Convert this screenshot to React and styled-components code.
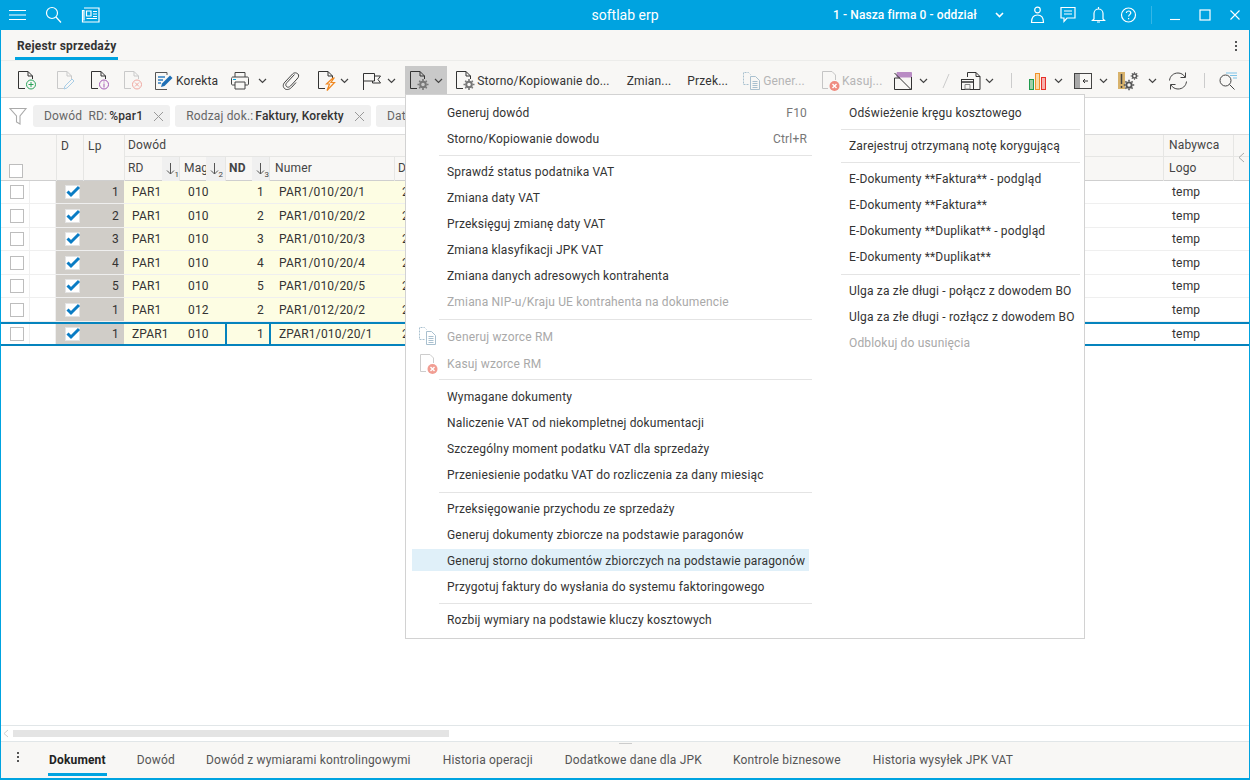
import React from 'react'
import styled, { createGlobalStyle } from 'styled-components'

const GlobalStyle = createGlobalStyle`
  html, body { margin: 0; padding: 0; height: 100%; overflow: hidden; }
  body { font-family: Roboto, "Liberation Sans", sans-serif; font-size: 12px; letter-spacing: 0.17px; color: #333; background: #fff; }
  * { box-sizing: border-box; }
`

const Window = styled.div`
  position: relative;
  width: 1250px;
  height: 780px;
  display: flex;
  flex-direction: column;
  border: 1px solid #00a3e0;
  border-top: 0;
  border-bottom-width: 2px;
  background: #fff;
  overflow: hidden;
`
const TitleBar = styled.div`
  height: 30px;
  margin: 0 -1px;
  background: #00a3e0;
  color: #fff;
  display: grid;
  grid-template-columns: 472px 306px 1fr;
  align-items: center;
  flex: none;
`
const TitleLeft = styled.div`
  display: flex;
  align-items: center;
  gap: 19px;
  padding-left: 9px;
`
const TitleText = styled.div`
  font-size: 14px;
  letter-spacing: 0;
  text-align: center;
`
const TitleRight = styled.div`
  display: flex;
  align-items: center;
  padding-left: 55px;
`
const Company = styled.span`
  font-size: 12px;
  letter-spacing: 0.1px;
  font-weight: 500;
  width: 162px;
`
const TitleIcons = styled.div`
  display: flex;
  align-items: center;
  gap: 13px;
  margin-left: 25px;
`
const TitleDivider = styled.div`
  width: 1px;
  height: 18px;
  background: #35b6e6;
  margin: 0 17px 0 14px;
`
const WinButtons = styled.div`
  display: flex;
  align-items: center;
  gap: 18px;
`
const TabBar = styled.div`
  height: 31px;
  flex: none;
  background: #f8f7f5;
  border-bottom: 1px solid #ececea;
  display: flex;
  align-items: flex-start;
  justify-content: space-between;
  padding: 0 12px 0 14px;
`
const MainTab = styled.div`
  height: 30px;
  padding: 9px 2px 0;
  font-weight: 700;
  font-size: 12px;
  color: #333;
  border-bottom: 3px solid #00a3e0;
`
const Dots = styled.div`
  display: flex;
  flex-direction: column;
  gap: 2px;
  padding: ${p => p.$pad || '11px 0 0'};
  i { width: 2px; height: 2px; background: #555; display: block; }
`
const Toolbar = styled.div`
  height: 37px;
  flex: none;
  background: #f8f7f5;
  border-bottom: 1px solid #d9d9d9;
  display: flex;
  align-items: center;
  padding: 4px 0 1px 15px;
`
const Tool = styled.div`
  display: flex;
  align-items: center;
  flex: none;
  gap: ${p => p.$gap ?? 3}px;
  height: 29px;
  margin-left: ${p => p.$ml || 0}px;
  padding: ${p => p.$pad || 0};
  background: ${p => p.$active ? '#c9c9c9' : 'transparent'};
  color: ${p => p.$off ? '#b5b5b5' : '#333'};
  font-size: 12px;
  white-space: nowrap;
`
const ToolDivider = styled.div`
  width: 1px;
  height: 15px;
  background: #ccc;
  flex: none;
  margin-left: ${p => p.$ml || 0}px;
`
const FilterBar = styled.div`
  height: 37px;
  flex: none;
  border-bottom: 1px solid #dcdcdc;
  display: flex;
  align-items: center;
  gap: 5px;
  padding-left: 8px;
`
const Chip = styled.div`
  height: 22px;
  display: flex;
  align-items: center;
  flex: none;
  padding: 0 6px 0 11px;
  background: #f0f0f0;
  border-radius: 3px;
  color: #666;
  font-size: 12px;
  b { font-weight: 500; color: #333; margin-left: 2px; margin-right: 10px; }
`
const Grid = styled.div`
  flex: 1;
  min-height: 0;
  overflow: hidden;
`
const COLUMNS = '29px 26px 27px 41px 38px 17px 27px 19px 27px 17px 125px 600px 169px 70px 1fr'
const HeadRow = styled.div`
  position: relative;
  display: grid;
  grid-template-columns: ${COLUMNS};
  grid-template-rows: 22px 24px;
  height: 46px;
  background: #f8f7f5;
  border-bottom: 1px solid #cfcfcf;
  color: #444;
`
const Head = styled.div`
  grid-column: ${p => p.$col};
  grid-row: ${p => p.$row};
  display: flex;
  align-items: ${p => p.$top ? 'flex-start' : 'center'};
  padding: ${p => p.$top ? '4px 0 0 4px' : `0 0 2px ${p.$pl ?? 3}px`};
  border-left: ${p => p.$line ? '1px solid #e6e6e4' : '0'};
  border-bottom: ${p => p.$under ? '1px solid #e6e6e4' : '0'};
  font-weight: ${p => p.$bold ? 700 : 400};
  overflow: hidden;
  white-space: nowrap;
`
const HeadBox = styled.div`
  grid-column: 1;
  grid-row: 1 / 3;
  display: flex;
  align-items: flex-end;
  padding: 0 0 3px 8px;
`
const SortHead = styled.div`
  grid-column: ${p => p.$col};
  grid-row: 2;
  display: flex;
  align-items: center;
  background: #f0f0f0;
  overflow: hidden;
`
const HeadChevron = styled.div`
  position: absolute;
  right: 4px;
  top: 17px;
  display: flex;
`
const Row = styled.div`
  display: grid;
  grid-template-columns: ${COLUMNS};
  height: ${p => p.$h}px;
  border-bottom: 1px solid #efefef;
  ${p => p.$selected && `
    border-top: 2px solid #0583bd;
    border-bottom: 2px solid #0583bd;
  `}
`
const Cell = styled.div`
  grid-column: ${p => p.$col};
  display: flex;
  align-items: center;
  justify-content: ${p => p.$right ? 'flex-end' : 'flex-start'};
  padding: ${p => p.$pad || '0 8px'};
  background: ${p => p.$bg || 'transparent'};
  color: #333;
  white-space: nowrap;
  overflow: hidden;
  border-right: ${p => p.$line ? '1px solid #efefef' : '0'};
  border-left: ${p => p.$blue ? '2px solid #0583bd' : '0'};
`
const Box = styled.div`
  width: 14px;
  height: 14px;
  border: 1px solid #bdbdbd;
  background: #fff;
  flex: none;
`
const CheckWrap = styled.div`
  position: relative;
  width: 13px;
  height: 12px;
  background: #fff;
  box-shadow: 0 0 0 1px #e4e4e4;
  svg { position: absolute; left: 0; top: -1px; }
`
const ScrollBar = styled.div`
  height: 17px;
  flex: none;
  border-top: 1px solid #e1e6e8;
  border-bottom: 1px solid #e1e6e8;
  display: flex;
  align-items: center;
  padding-left: 2px;
  gap: 4px;
`
const Thumb = styled.div`
  width: 436px;
  height: 7px;
  background: #e4e4e4;
`
const BottomTabs = styled.div`
  position: relative;
  flex: none;
  height: 36px;
  background: #f8f7f5;
  display: flex;
  align-items: flex-start;
  padding-left: 16px;
`
const Grip = styled.div`
  position: absolute;
  left: 618px;
  top: 1px;
  width: 13px;
  height: 1px;
  background: #ccc;
`
const BottomTab = styled.div`
  height: 34px;
  padding: 11px 1px 0;
  margin-left: ${p => p.$ml}px;
  font-size: 12px;
  color: ${p => p.$on ? '#222' : '#555'};
  font-weight: ${p => p.$on ? 700 : 400};
  border-bottom: ${p => p.$on ? '3px solid #00a3e0' : '0'};
`
const Menu = styled.div`
  position: absolute;
  left: 404px;
  top: 94px;
  width: 680px;
  height: 545px;
  background: #fff;
  border: 1px solid #d2d2d2;
  display: grid;
  grid-template-columns: 403px 1fr;
  padding-top: 5px;
`
const MenuCol = styled.div`
  display: flex;
  flex-direction: column;
  padding-left: ${p => p.$pl}px;
`
const Item = styled.div`
  height: ${p => p.$h || 26}px;
  flex: none;
  display: flex;
  align-items: center;
  justify-content: space-between;
  padding: 0 2px 0 ${p => p.$text}px;
  color: ${p => p.$off ? '#a9a9a9' : '#333'};
  font-size: 12px;
  position: relative;
  white-space: nowrap;
  span { color: #777; }
  svg { position: absolute; left: 6px; top: 3px; }
  ${p => p.$hover && `
    height: 22px;
    margin: 1px 0 3px;
    padding-top: 2px;
    background: #e0f0f9;
  `}
`
const Sep = styled.div`
  height: ${p => p.$h}px;
  flex: none;
  position: relative;
  margin: 0 ${p => p.$mr || 0}px 0 ${p => p.$ml || 0}px;
  &::after {
    content: '';
    position: absolute;
    left: 0;
    right: 0;
    top: ${p => p.$y}px;
    height: 1px;
    background: #e4e4e4;
  }
`

const Stroke = ({ w = 24, h = 24, c = '#333', sw = 1, children }) => (
  <svg width={w} height={h} viewBox={`0 0 ${w} ${h}`} fill="none" stroke={c} strokeWidth={sw} style={{ flex: 'none' }}>{children}</svg>
)

// document outline with a folded corner, a badge goes in children
const Doc = ({ c = '#333', children }) => (
  <svg width="22" height="22" viewBox="0 0 22 22" fill="none" stroke={c} strokeWidth="1" style={{ flex: 'none' }}>
    <path d="M16.5 9V6L12 1.5H2.5V18.5H9" />
    <path d="M12 1.5V6H16.5" />
    {children}
  </svg>
)
const Gear = ({ x, y, c = '#666', s = 1 }) => (
  <g transform={`translate(${x} ${y}) scale(${s})`} stroke={c} fill="none">
    <circle r="2.8" strokeWidth="2" />
    <path strokeWidth="1.6" d="M0-5.5V-3.6M0 3.6V5.5M-5.5 0H-3.6M3.6 0H5.5M-3.8-3.8L-2.6-2.6M2.6 2.6L3.8 3.8M-3.8 3.8L-2.6 2.6M2.6-2.6L3.8-3.8" />
  </g>
)
const Chevron = ({ c = '#444' }) => (
  <Stroke w={9} h={6} c={c} sw={1.2}><path d="M1 1L4.5 4.5L8 1" /></Stroke>
)
const CopyDoc = ({ c = '#a9c0cf' }) => (
  <Stroke w={20} h={20} c={c}>
    <path d="M6.5 13.5H1.5V1.5H6.5L8.5 3.5" strokeDasharray="2 1" />
    <path d="M8.5 5.5H13.5L17.5 9.5V18.5H8.5Z" />
    <path d="M10.5 10.5H15.5M10.5 12.5H15.5M10.5 14.5H15.5M10.5 16.5H15.5" />
  </Stroke>
)
const DocCross = ({ opacity = 1 }) => (
  <svg width="22" height="22" viewBox="0 0 22 22" fill="none" style={{ flex: 'none', opacity }}>
    <path d="M15.5 10V5L12 1.5H2.5V18.5H8" stroke="#c5c5c5" />
    <circle cx="14.5" cy="16" r="5" fill="#ef8c80" />
    <path d="M12.5 14L16.5 18M16.5 14L12.5 18" stroke="#fff" strokeWidth="1.4" />
  </svg>
)
const SortIcon = ({ n }) => (
  <svg width="17" height="20" viewBox="0 0 17 20" fill="none" style={{ flex: 'none' }}>
    <path d="M8.5 4V15M5 11.5L8.5 15L12 11.5" stroke="#555" />
    <text x="12.5" y="18" fontSize="8" fill="#444" stroke="none" fontFamily="Roboto">{n}</text>
  </svg>
)
const CloseSmall = () => (
  <Stroke w={11} h={11} c="#999"><path d="M1 1L10 10M10 1L1 10" /></Stroke>
)

const rows = [
  ['1', 'PAR1', '010', '1', 'PAR1/010/20/1'],
  ['2', 'PAR1', '010', '2', 'PAR1/010/20/2'],
  ['3', 'PAR1', '010', '3', 'PAR1/010/20/3'],
  ['4', 'PAR1', '010', '4', 'PAR1/010/20/4'],
  ['5', 'PAR1', '010', '5', 'PAR1/010/20/5'],
  ['1', 'PAR1', '012', '2', 'PAR1/012/20/2'],
  ['1', 'ZPAR1', '010', '1', 'ZPAR1/010/20/1'],
]
const rowHeights = [23, 24, 23, 24, 23, 24, 24]

const leftMenu = [
  { t: 'Generuj dowód', k: 'F10' },
  { t: 'Storno/Kopiowanie dowodu', k: 'Ctrl+R' },
  { s: 7, y: 3 },
  { t: 'Sprawdź status podatnika VAT' },
  { t: 'Zmiana daty VAT' },
  { t: 'Przeksięguj zmianę daty VAT' },
  { t: 'Zmiana klasyfikacji JPK VAT' },
  { t: 'Zmiana danych adresowych kontrahenta' },
  { t: 'Zmiana NIP-u/Kraju UE kontrahenta na dokumencie', off: true },
  { s: 8, y: 4 },
  { t: 'Generuj wzorce RM', off: true, h: 27, icon: <CopyDoc /> },
  { t: 'Kasuj wzorce RM', off: true, h: 27, icon: <DocCross opacity={0.85} /> },
  { s: 7, y: 2 },
  { t: 'Wymagane dokumenty' },
  { t: 'Naliczenie VAT od niekompletnej dokumentacji' },
  { t: 'Szczególny moment podatku VAT dla sprzedaży' },
  { t: 'Przeniesienie podatku VAT do rozliczenia za dany miesiąc' },
  { s: 8, y: 4 },
  { t: 'Przeksięgowanie przychodu ze sprzedaży' },
  { t: 'Generuj dokumenty zbiorcze na podstawie paragonów' },
  { t: 'Generuj storno dokumentów zbiorczych na podstawie paragonów', hover: true },
  { t: 'Przygotuj faktury do wysłania do systemu faktoringowego' },
  { s: 7, y: 3 },
  { t: 'Rozbij wymiary na podstawie kluczy kosztowych' },
]
const rightMenu = [
  { t: 'Odświeżenie kręgu kosztowego' },
  { s: 7, y: 3 },
  { t: 'Zarejestruj otrzymaną notę korygującą' },
  { s: 7, y: 3 },
  { t: 'E-Dokumenty **Faktura** - podgląd' },
  { t: 'E-Dokumenty **Faktura**' },
  { t: 'E-Dokumenty **Duplikat** - podgląd' },
  { t: 'E-Dokumenty **Duplikat**' },
  { s: 8, y: 4 },
  { t: 'Ulga za złe długi - połącz z dowodem BO' },
  { t: 'Ulga za złe długi - rozłącz z dowodem BO' },
  { t: 'Odblokuj do usunięcia', off: true },
]

const bottomTabs = [
  ['Dokument', 29, true],
  ['Dowód', 29],
  ['Dowód z wymiarami kontrolingowymi', 29],
  ['Historia operacji', 30],
  ['Dodatkowe dane dla JPK', 30],
  ['Kontrole biznesowe', 29],
  ['Historia wysyłek JPK VAT', 30],
]

const App = () => (
  <>
    <GlobalStyle />
    <Window>
      <TitleBar>
        <TitleLeft>
          <Stroke w={17} h={12} c="#fff" sw={1.2}><path d="M0 1.5H17M0 6H17M0 10.5H17" /></Stroke>
          <Stroke w={17} h={18} c="#fff" sw={1.2}><circle cx="7" cy="7" r="5.5" /><path d="M11 11L16 16.5" /></Stroke>
          <Stroke w={19} h={16} c="#fff" sw={1.2}>
            <path d="M3 1H18V15H1.5V3.5H3V13.5" />
            <path d="M5.5 4H10V9H5.5ZM12 4.5H16M12 7H16M12 9.5H16M5.5 11.5H16" />
          </Stroke>
        </TitleLeft>
        <TitleText>softlab erp</TitleText>
        <TitleRight>
          <Company>1 - Nasza firma 0 - oddział</Company>
          <Stroke w={9} h={6} c="#fff" sw={1.6}><path d="M1 1L4.5 4.5L8 1" /></Stroke>
          <TitleIcons>
            <Stroke w={17} h={18} c="#fff" sw={1.2}><circle cx="8.5" cy="4" r="2.8" /><path d="M2.5 16.5C2.5 11 5 9 8.5 9S14.5 11 14.5 16.5Z" /></Stroke>
            <Stroke w={18} h={18} c="#fff" sw={1.2}><path d="M2 1.5H16V12H8L5 15.5V12H2ZM5 5H13M5 8H13" /></Stroke>
            <Stroke w={17} h={18} c="#fff" sw={1.2}><path d="M8.5 1V3M4 13V7.5C4 5 6 3 8.5 3S13 5 13 7.5V13L14.5 14.5H2.5ZM7 16H10" /></Stroke>
            <Stroke w={17} h={18} c="#fff" sw={1.2}>
              <circle cx="8.5" cy="9" r="7" />
              <path d="M6.3 7C6.5 5.5 7.5 5 8.5 5C9.8 5 10.8 5.8 10.8 7C10.8 8.6 8.6 8.7 8.6 10.5M8.6 12V13.3" />
            </Stroke>
          </TitleIcons>
          <TitleDivider />
          <WinButtons>
            <Stroke w={12} h={12} c="#fff" sw={1.1}><path d="M1 10.5H11" /></Stroke>
            <Stroke w={12} h={12} c="#fff" sw={1.2}><rect x="1" y="1" width="10" height="10" /></Stroke>
            <Stroke w={12} h={12} c="#fff" sw={1.1}><path d="M1.5 1.5L10.5 10.5M10.5 1.5L1.5 10.5" /></Stroke>
          </WinButtons>
        </TitleRight>
      </TitleBar>

      <TabBar>
        <MainTab>Rejestr sprzedaży</MainTab>
        <Dots><i /><i /><i /></Dots>
      </TabBar>

      <Toolbar>
        <Tool>
          <Doc>
            <circle cx="15" cy="14.5" r="4.5" stroke="#2aa35a" fill="#f8f7f5" />
            <path d="M12.5 14.5H17.5M15 12V17" stroke="#2aa35a" />
          </Doc>
        </Tool>
        <Tool $ml={17}>
          <Doc c="#c9c9c9"><path d="M9 19L10 16L17 9L19 11L12 18Z" stroke="#a8cde6" fill="#f8f7f5" /></Doc>
        </Tool>
        <Tool $ml={12}>
          <Doc>
            <circle cx="15" cy="14.5" r="4.5" stroke="#a45ab5" fill="#f8f7f5" />
            <path d="M15 13.5V17.5M15 11.5V12.5" stroke="#a45ab5" />
          </Doc>
        </Tool>
        <Tool $ml={11}>
          <Doc c="#c9c9c9">
            <circle cx="15" cy="14.5" r="4.5" stroke="#f0a7a0" fill="#f8f7f5" />
            <path d="M13 12.5L17 16.5M17 12.5L13 16.5" stroke="#f0a7a0" />
          </Doc>
        </Tool>
        <Tool $ml={9} $gap={1}>
          <svg width="22" height="22" viewBox="0 0 22 22" fill="none" style={{ flex: 'none' }}>
            <path d="M14 5V2.5H2.5V19.5H14" stroke="#555" />
            <path d="M5 7H12M5 10H10M5 13H8" stroke="#2f7fc1" strokeWidth="1.3" />
            <path d="M8 17L9 13.5L17 5.5L19.5 8L11.5 16Z" fill="#1f6fb5" />
          </svg>
          Korekta
        </Tool>
        <Tool $ml={12} $gap={8}>
          <Stroke w={20} h={20} c="#444">
            <path d="M5 6V1.5H15V6M5 14H2.5C1.5 14 1.5 13 1.5 13V7.5C1.5 6.5 2.5 6 2.5 6H17.5C18.5 6 18.5 7 18.5 7.5V13C18.5 14 17.5 14 17.5 14H15M5 11H15V18H5Z" />
            <path d="M3 8.5H6" stroke="#00a3e0" />
          </Stroke>
          <Chevron />
        </Tool>
        <Tool $ml={15}>
          <Stroke w={18} h={20} c="#444">
            <path d="M12.5 3.5L5 11.5C3.5 13 3.5 14.5 4.5 15.5S7 16.5 8.5 15L15 8C17 6 17 4 16 3S12.5 1 10.5 3L3 11C0.5 13.5 1 16 2.5 17.5S7 19 9.5 16.5L14 11.5" />
          </Stroke>
        </Tool>
        <Tool $ml={16} $gap={2}>
          <svg width="22" height="22" viewBox="0 0 22 22" fill="none" style={{ flex: 'none' }}>
            <path d="M16.5 8V6L12 1.5H2.5V18.5H9M12 1.5V6H16.5" stroke="#333" />
            <path d="M17 8L10.5 14H13.5L11 20.5L18.5 12.5H15L18 8Z" fill="#f8f7f5" stroke="#f08a24" strokeWidth="1.2" />
          </svg>
          <Chevron />
        </Tool>
        <Tool $ml={13} $gap={5}>
          <Stroke w={20} h={20} c="#333">
            <path d="M1.5 19V2.5H12.5V5H18.5L16 8.5L18.5 12H10.5V10H1.5" />
            <path d="M12.5 5V10H10.5" />
          </Stroke>
          <Chevron />
        </Tool>
        <Tool $ml={9} $active $gap={4} $pad="0 4px 0 3px">
          <Doc c="#333"><Gear x={15} y={14.5} c="#777" /></Doc>
          <Chevron />
        </Tool>
        <Tool $ml={7} $gap={1}>
          <Doc c="#333"><Gear x={15} y={14.5} c="#777" /></Doc>
          Storno/Kopiowanie do...
        </Tool>
        <Tool $ml={17}>Zmian...</Tool>
        <Tool $ml={16}>Przek...</Tool>
        <Tool $ml={14} $off $gap={1}><CopyDoc />Gener...</Tool>
        <Tool $ml={15} $off $gap={0}><DocCross />Kasuj...</Tool>
        <Tool $ml={11} $gap={6}>
          <Stroke w={20} h={20} c="#333">
            <path d="M1.5 7V18.5H18.5V13" />
            <path d="M4 1.5H18.5V6H4Z" fill="#b98cc4" stroke="#b98cc4" />
            <path d="M1.5 2L18 18.5" />
            <path d="M18.5 6V13M1.5 7H7" />
          </Stroke>
          <Chevron />
        </Tool>
        <Tool $ml={13}>
          <Stroke w={10} h={16} c="#ccc"><path d="M2 15L8 1" /></Stroke>
        </Tool>
        <Tool $ml={9} $gap={3}>
          <Stroke w={22} h={20} c="#333">
            <path d="M7.5 6V1.5H16L20 5.5V18.5H14M16 1.5V5.5H20" />
            <rect x="1.5" y="8.5" width="12" height="10" />
            <path d="M1.5 11H13.5" strokeWidth="1.5" />
            <path d="M5 13.5H10V18H5Z" stroke="#888" />
          </Stroke>
          <Chevron />
        </Tool>
        <ToolDivider $ml={17} />
        <Tool $ml={16} $gap={6}>
          <svg width="20" height="20" viewBox="0 0 20 20" fill="none" style={{ flex: 'none' }}>
            <rect x="1.5" y="8.5" width="4" height="10" fill="#9ed0a8" stroke="#1f9a4c" />
            <rect x="7.5" y="2.5" width="4" height="16" fill="#fbd9a8" stroke="#f0922a" />
            <rect x="13.5" y="6.5" width="4" height="12" fill="#f7b0ad" stroke="#e62f2a" />
          </svg>
          <Chevron />
        </Tool>
        <Tool $ml={10} $gap={6}>
          <svg width="20" height="18" viewBox="0 0 20 18" fill="none" style={{ flex: 'none' }}>
            <rect x="1.5" y="1.5" width="17" height="15" stroke="#444" />
            <rect x="2" y="2" width="5" height="14" fill="#a8a8a8" />
            <path d="M15 9H10M12 7L10 9L12 11" stroke="#333" />
          </svg>
          <Chevron />
        </Tool>
        <Tool $ml={9} $gap={5}>
          <svg width="26" height="22" viewBox="0 0 26 22" fill="none" style={{ flex: 'none' }}>
            <rect x="1" y="2" width="7" height="17" fill="#d9b36c" />
            <path d="M4.5 4V14M4.5 16V18" stroke="#444" strokeWidth="1.5" />
            <Gear x={17.5} y={6} c="#555" s={0.7} />
            <Gear x={12} y={15} c="#555" s={0.95} />
          </svg>
          <Chevron />
        </Tool>
        <Tool $ml={11}>
          <Stroke w={20} h={20} c="#444">
            <path d="M1.5 9.5C2 5 5.5 2 10 2C13 2 15.5 3.5 17 6M17.5 1.5V6.5H12.5" />
            <path d="M18.5 10.5C18 15 14.5 18 10 18C7 18 4.5 16.5 3 14M2.5 18.5V13.5H7.5" />
          </Stroke>
        </Tool>
        <ToolDivider $ml={16} />
        <Tool $ml={13}>
          <svg width="20" height="20" viewBox="0 0 20 20" fill="none" style={{ flex: 'none' }}>
            <circle cx="7.5" cy="9.5" r="5.5" stroke="#444" />
            <path d="M11.5 13.5L16.5 18.5" stroke="#444" />
            <path d="M8 2H19M12 4.5H19M15 7H19" stroke="#7cc3e8" />
          </svg>
        </Tool>
      </Toolbar>

      <FilterBar>
        <Stroke w={19} h={19} c="#aaa" sw={1.1}><path d="M1 1.5H17L11 9V17L7.5 15V9Z" /></Stroke>
        <Chip>Dowód&nbsp; RD:<b>%par1</b><CloseSmall /></Chip>
        <Chip>Rodzaj dok.:<b>Faktury, Korekty</b><CloseSmall /></Chip>
        <Chip>Data</Chip>
      </FilterBar>

      <Grid>
        <HeadRow>
          <HeadBox><Box /></HeadBox>
          <Head $col="3" $row="1 / 3" $top $line>D</Head>
          <Head $col="4" $row="1 / 3" $top $line>Lp</Head>
          <Head $col="5 / 14" $row="1" $line $under>Dowód</Head>
          <Head $col="5" $row="2" $line>RD</Head>
          <SortHead $col="6"><SortIcon n="1" /></SortHead>
          <Head $col="7" $row="2" $line $pl={4}>Mag</Head>
          <SortHead $col="8"><SortIcon n="2" /></SortHead>
          <Head $col="9" $row="2" $bold $line>ND</Head>
          <SortHead $col="10"><SortIcon n="3" /></SortHead>
          <Head $col="11" $row="2" $line $pl={5}>Numer</Head>
          <Head $col="12" $row="2" $line>D</Head>
          <Head $col="14" $row="1" $line $under $pl={5}>Nabywca</Head>
          <Head $col="14" $row="2" $line $pl={5}>Logo</Head>
          <Head $col="15" $row="1" $line $under />
          <Head $col="15" $row="2" $line />
          <HeadChevron>
            <Stroke w={7} h={11} c="#aaa"><path d="M6 1L1 5.5L6 10" /></Stroke>
          </HeadChevron>
        </HeadRow>
        {rows.map((r, i) => {
          const sel = i === rows.length - 1
          return (
            <Row key={i} $h={rowHeights[i]} $selected={sel}>
              <Cell $col="1" $line $pad="0 0 0 9px"><Box /></Cell>
              <Cell $col="2" $line />
              <Cell $col="3" $bg="#d0cdc8" $pad="0 0 0 10px">
                <CheckWrap>
                  <svg width="15" height="13" viewBox="0 0 15 13"><path d="M1.5 6.5L5 10L13 2" fill="none" stroke="#0a7cc4" strokeWidth="3" /></svg>
                </CheckWrap>
              </Cell>
              <Cell $col="4" $bg="#d0cdc8" $right $pad="0 5px 0 0">{r[0]}</Cell>
              <Cell $col="5 / 7" $bg="#fdfde3">{r[1]}</Cell>
              <Cell $col="7 / 9" $bg="#fdfde3" $pad="0 9px">{r[2]}</Cell>
              <Cell $col="9 / 11" $bg="#fdfde3" $right $pad="0 5px 0 0" $blue={sel}>{r[3]}</Cell>
              <Cell $col="11" $bg="#fdfde3" $blue={sel} $pad={sel ? '0 8px' : '0 10px'}>{r[4]}</Cell>
              <Cell $col="12" $bg="#fdfde3">2</Cell>
              <Cell $col="14" $pad="0 0 0 9px">temp</Cell>
            </Row>
          )
        })}
      </Grid>

      <ScrollBar>
        <Stroke w={6} h={9} c="#d0d0d0"><path d="M5 1L1 4.5L5 8" /></Stroke>
        <Thumb />
      </ScrollBar>
      <BottomTabs>
        <Grip />
        <Dots $pad="10px 0 0"><i /><i /><i /></Dots>
        {bottomTabs.map(([t, ml, on]) => <BottomTab key={t} $ml={ml} $on={on}>{t}</BottomTab>)}
      </BottomTabs>

      <Menu>
        <MenuCol $pl={6}>
          {leftMenu.map((m, i) => m.s
            ? <Sep key={i} $h={m.s} $y={m.y} $ml={27} $mr={-3} />
            : <Item key={i} $text={35} $h={m.h} $off={m.off} $hover={m.hover}>{m.icon}{m.t}{m.k && <span>{m.k}</span>}</Item>)}
        </MenuCol>
        <MenuCol $pl={32}>
          {rightMenu.map((m, i) => m.s
            ? <Sep key={i} $h={m.s} $y={m.y} $mr={4} />
            : <Item key={i} $text={8} $off={m.off}>{m.t}</Item>)}
        </MenuCol>
      </Menu>
    </Window>
  </>
)

export default App
